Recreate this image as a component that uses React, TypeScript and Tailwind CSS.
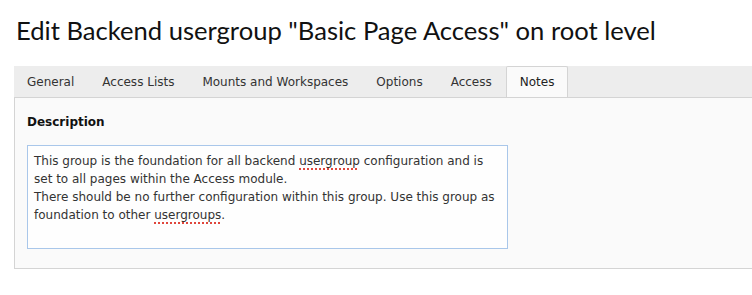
const tabs = ['General', 'Access Lists', 'Mounts and Workspaces', 'Options', 'Access', 'Notes'];

const Misspelled = ({ children }: { children: string }) => (
  <span className="underline decoration-dotted decoration-[#e0463c] decoration-2 underline-offset-[3px]">
    {children}
  </span>
);

const App = () => {
  const active = 'Notes';

  return (
    <div className="w-[752px] h-[295px] overflow-hidden bg-white text-[#333]">
      <h1 className="ml-[16px] pt-[12px] text-[25.6px] leading-[36px] text-[#111] whitespace-nowrap font-['Lato','Open_Sans',sans-serif]">
        Edit Backend usergroup "Basic Page Access" on root level
      </h1>

      <div className="ml-[14px] mt-[18px] w-[760px] font-['DejaVu_Sans','Verdana',sans-serif] text-[12px]">
        {/* Tab strip */}
        <div className="flex h-[32px] items-end bg-[#ededed] border-b border-[#d4d4d4]">
          <div className="flex -ml-px">
            {tabs.map((tab) => (
              <div
                key={tab}
                className={
                  tab === active
                    ? 'h-[31px] -mb-px px-[13px] flex items-center bg-[#fafafa] border border-b-0 border-[#d4d4d4] rounded-t-[2px] text-[#222]'
                    : 'h-[31px] px-[13px] flex items-center border border-transparent border-b-0 text-[#333]'
                }
              >
                {tab}
              </div>
            ))}
          </div>
        </div>

        {/* Panel */}
        <div className="bg-[#fafafa] border-l border-b border-[#d4d4d4] pl-[12px] pt-[15px] pb-[19px]">
          <div className="font-bold text-[#111] leading-[18px]">Description</div>
          <div className="mt-[14px] w-[481px] h-[104px] bg-[#fefefe] border border-[#a9c7ea] px-[6px] pt-[6px] leading-[18px] text-[#333] whitespace-nowrap">
            This group is the foundation for all backend <Misspelled>usergroup</Misspelled> configuration and is
            <br />
            set to all pages within the Access module.
            <br />
            There should be no further configuration within this group. Use this group as
            <br />
            foundation to other <Misspelled>usergroups</Misspelled>.
          </div>
        </div>
      </div>
    </div>
  );
};

export default App;
